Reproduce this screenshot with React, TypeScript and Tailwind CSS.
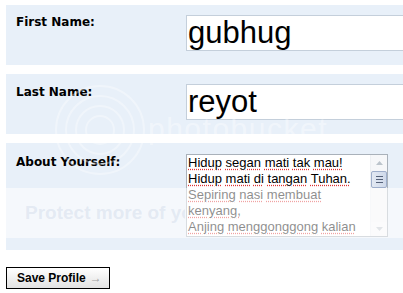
import React from 'react';

const lines = [
  'Hidup segan mati tak mau!',
  'Hidup mati di tangan Tuhan.',
  'Sepiring nasi membuat',
  'kenyang,',
  'Anjing menggonggong kalian',
];

function Spelled({ text }: { text: string }) {
  const words = text.split(' ');
  return (
    <div className="h-[16px] whitespace-nowrap">
      {words.map((w, i) => (
        <React.Fragment key={i}>
          <span className="underline decoration-dotted decoration-[#d33] underline-offset-[2px]">{w}</span>
          {i < words.length - 1 ? ' ' : ''}
        </React.Fragment>
      ))}
    </div>
  );
}

function Scrollbar() {
  return (
    <div className="flex w-[17px] flex-col border-l border-[#eef0f3] bg-[#f3f4f6]">
      <div className="flex h-[16px] items-center justify-center bg-[#f6f7f9]">
        <svg width="7" height="4" viewBox="0 0 7 4">
          <path d="M0 4 L3.5 0 L7 4 Z" fill="#bcc4cc" />
        </svg>
      </div>
      <div className="flex h-[17px] flex-col items-center justify-center gap-[2px] rounded-[2px] border border-[#9eaecb] bg-gradient-to-r from-[#e3e9f3] to-[#cfd9ea]">
        <div className="h-px w-[7px] bg-[#56627a]" />
        <div className="h-px w-[7px] bg-[#56627a]" />
        <div className="h-px w-[7px] bg-[#56627a]" />
      </div>
      <div className="flex-1" />
      <div className="flex h-[14px] items-center justify-center bg-[#f6f7f9]">
        <svg width="7" height="4" viewBox="0 0 7 4">
          <path d="M0 0 L3.5 4 L7 0 Z" fill="#bcc4cc" />
        </svg>
      </div>
    </div>
  );
}

export default function App() {
  return (
    <div className="relative h-[293px] w-[403px] overflow-hidden bg-white font-['DejaVu_Sans',sans-serif] text-black">
      <div className="flex w-[460px] flex-col gap-[9px] pl-[6px] pt-[5px]">
        <div className="flex h-[60px] bg-[#e8f0f9]">
          <div className="w-[180px] pl-[10px] pt-[8px] text-[12px] font-bold">First Name:</div>
          <div className="flex-1 pt-[10px]">
            <div className="h-[36px] border border-[#c4cfdb] bg-white pl-[1px] font-['Liberation_Sans',Arial,sans-serif] text-[31px] leading-[34px]">
              gubhug
            </div>
          </div>
        </div>

        <div className="flex h-[60px] bg-[#e8f0f9]">
          <div className="w-[180px] pl-[10px] pt-[9px] text-[12px] font-bold">Last Name:</div>
          <div className="flex-1 pt-[10px]">
            <div className="h-[36px] border border-[#c4cfdb] bg-white pl-[1px] font-['Liberation_Sans',Arial,sans-serif] text-[31px] leading-[34px]">
              reyot
            </div>
          </div>
        </div>

        <div className="flex h-[107px] bg-[#e8f0f9]">
          <div className="w-[180px] pl-[10px] pt-[10px] text-[12px] font-bold">About Yourself:</div>
          <div className="pt-[11px]">
            <div className="flex h-[83px] w-[202px] border border-[#a9b1ba] bg-white">
              <div className="flex-1 overflow-hidden pl-[1px] font-['Liberation_Sans',Arial,sans-serif] text-[13px] leading-[16px]">
                {lines.map((l) => (
                  <Spelled key={l} text={l} />
                ))}
              </div>
              <Scrollbar />
            </div>
          </div>
        </div>

        <button className="mt-[8px] flex h-[22px] w-[104px] items-center border border-black bg-gradient-to-b from-white to-[#e2e2e2] pl-[10px] font-['Liberation_Sans',Arial,sans-serif] text-[12px] font-bold">
          Save Profile
          <span className="ml-[4px] font-normal text-[#a0a0a0]">→</span>
        </button>
      </div>

      {/* photobucket watermark */}
      <svg className="pointer-events-none absolute left-0 top-0" width="403" height="293">
        <g fill="none" stroke="#ffffff" strokeOpacity="0.35" strokeWidth="2">
          <circle cx="100" cy="130" r="14" />
          <circle cx="100" cy="130" r="24" />
          <circle cx="100" cy="130" r="34" />
          <circle cx="100" cy="130" r="44" />
        </g>
      </svg>
      <div className="pointer-events-none absolute left-[148px] top-[112px] font-['Liberation_Sans',Arial,sans-serif] text-[30px] leading-[34px] tracking-[1.5px] text-white/40">
        photobucket
      </div>
      <div className="pointer-events-none absolute left-0 top-[188px] h-[50px] w-[403px] bg-white/55">
        <div className="ml-[25px] w-[160px] overflow-hidden pt-[14px] font-['Liberation_Sans',Arial,sans-serif] text-[19px] font-bold leading-[22px] whitespace-nowrap text-[#b9c9dc]/30">
          Protect more of your memories for less!
        </div>
      </div>
    </div>
  );
}
